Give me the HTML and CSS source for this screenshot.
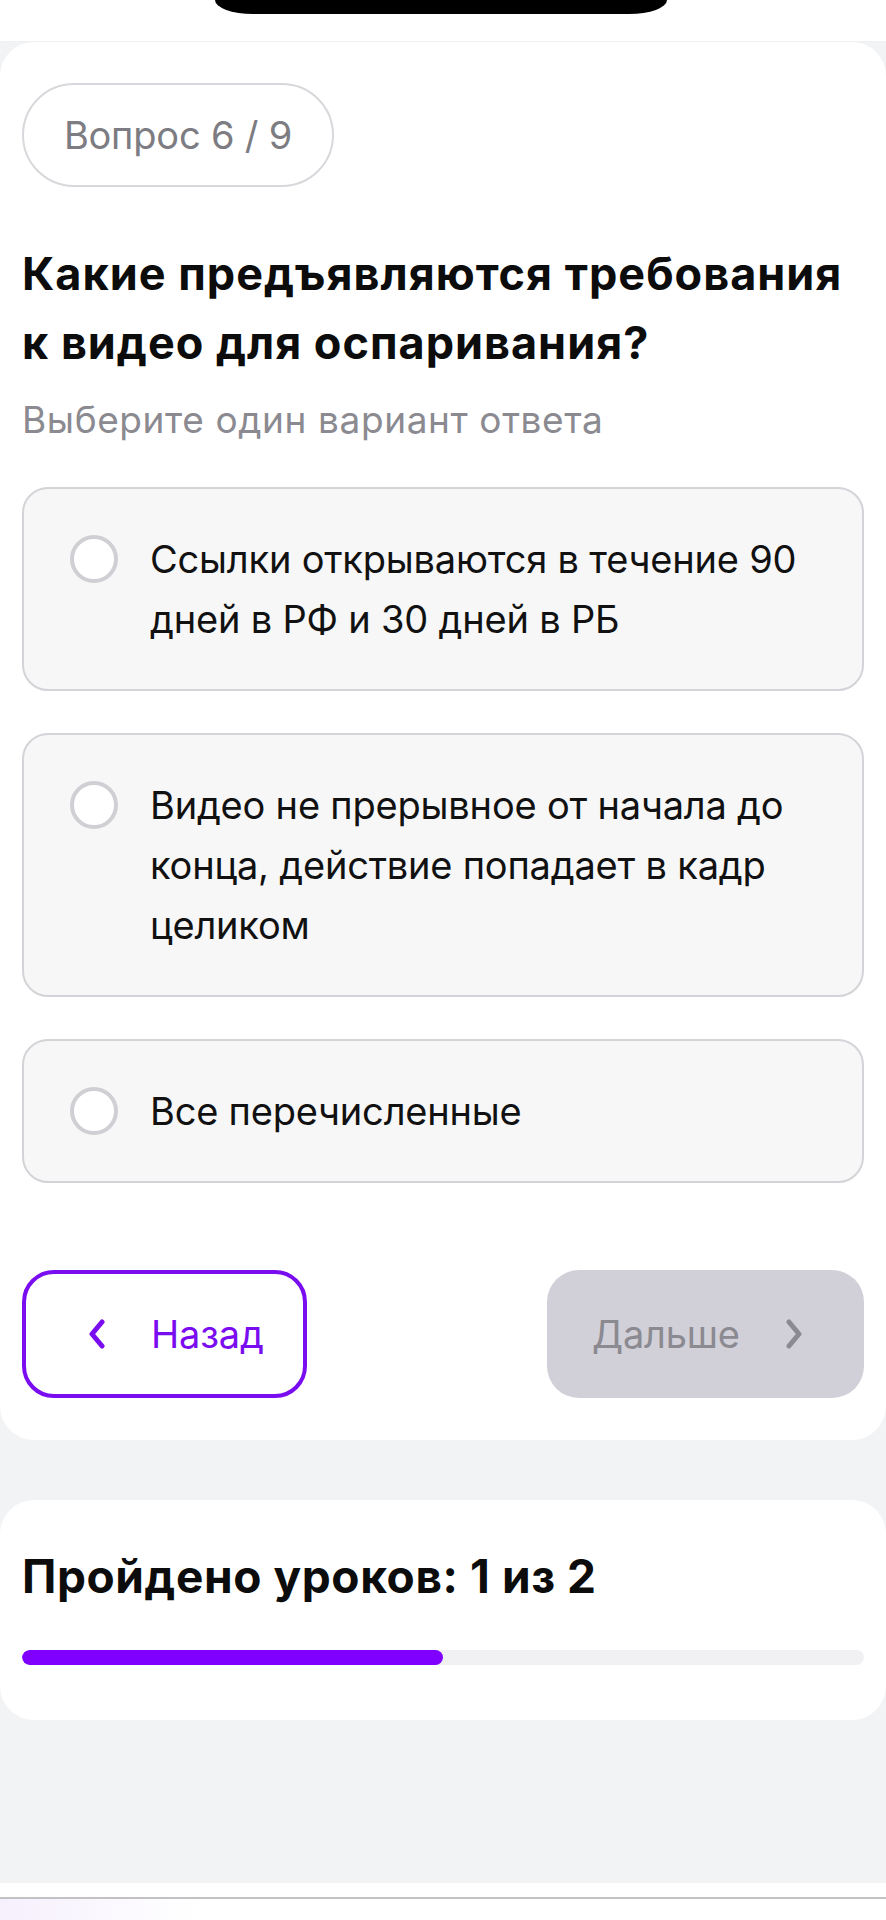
FILE: index.html
```html
<!DOCTYPE html>
<html lang="ru">
<head>
<meta charset="utf-8">
<title>Вопрос 6 / 9</title>
<link rel="stylesheet" href="styles.css">
</head>
<body>
<div class="status"><div class="notch"></div></div>
<main class="page">
  <section class="card quiz">
    <div class="pill">Вопрос 6 / 9</div>
    <h1 class="question">Какие предъявляются требования к видео для оспаривания?</h1>
    <p class="hint">Выберите один вариант ответа</p>
    <div class="options">
      <label class="option"><span class="radio"></span><span class="opt-text">Ссылки открываются в течение 90 дней в РФ и 30 дней в РБ</span></label>
      <label class="option"><span class="radio"></span><span class="opt-text">Видео не прерывное от начала до конца, действие попадает в кадр целиком</span></label>
      <label class="option"><span class="radio"></span><span class="opt-text">Все перечисленные</span></label>
    </div>
    <div class="nav">
      <button class="btn btn-back">
        <svg class="chev" viewBox="0 0 20 30" width="20" height="30"><polyline points="15,3 5,15 15,27" fill="none" stroke="currentColor" stroke-width="5" stroke-linecap="round" stroke-linejoin="round"/></svg>
        <span>Назад</span>
      </button>
      <button class="btn btn-next" disabled>
        <span>Дальше</span>
        <svg class="chev" viewBox="0 0 20 30" width="20" height="30"><polyline points="5,3 15,15 5,27" fill="none" stroke="currentColor" stroke-width="5" stroke-linecap="round" stroke-linejoin="round"/></svg>
      </button>
    </div>
  </section>
  <section class="card progress-card">
    <h2 class="progress-title">Пройдено уроков: 1 из 2</h2>
    <div class="track"><div class="fill" style="width:50%"></div></div>
  </section>
</main>
<footer class="bottom"><div class="glow"></div></footer>
</body>
</html>
```
FILE: styles.css
```css
* { box-sizing: border-box; }
html, body { margin: 0; padding: 0; }
body {
  width: 886px;
  height: 1920px;
  background: #f2f3f5;
  font-family: Inter, "Noto Sans", "Liberation Sans", sans-serif;
  color: #111111;
  display: flex;
  flex-direction: column;
  overflow: hidden;
}
.status {
  height: 42px;
  background: #ffffff;
  position: relative;
  flex: none;
  border-bottom: 1px solid #f0f0f2;
}
.notch {
  position: absolute;
  left: 215px;
  top: 0;
  width: 452px;
  height: 14px;
  background: #000;
  border-radius: 0 0 38px 38px / 0 0 14px 14px;
}
.page {
  flex: 1;
  display: flex;
  flex-direction: column;
  gap: 60px;
}
.card {
  background: #ffffff;
  border-radius: 34px;
  padding: 0 22px;
}
.quiz {
  padding-top: 41px;
  padding-bottom: 42px;
  display: flex;
  flex-direction: column;
}
.pill {
  align-self: flex-start;
  width: 312px;
  height: 104px;
  border: 2px solid #d8d8dc;
  border-radius: 52px;
  display: flex;
  align-items: center;
  justify-content: center;
  font-size: 38px;
  color: #7c7c82;
  letter-spacing: -0.2px;
}
.question {
  margin: 52px 0 0;
  max-width: 828px;
  font-size: 45px;
  line-height: 69px;
  font-weight: 700;
  letter-spacing: 1px;
  color: #0c0c0c;
}
.hint {
  margin: 21px 0 0;
  font-size: 37px;
  line-height: 44px;
  color: #8a8a90;
  letter-spacing: 0.6px;
}
.options {
  margin-top: 45px;
  display: flex;
  flex-direction: column;
  gap: 42px;
}
.option {
  display: flex;
  align-items: flex-start;
  gap: 32px;
  padding: 40px 30px 40px 46px;
  background: #f7f7f8;
  border: 2px solid #d4d4d8;
  border-radius: 26px;
}
.radio {
  flex: none;
  width: 48px;
  height: 48px;
  margin-top: 6px;
  border: 4px solid #cfcfd4;
  border-radius: 50%;
  background: #ffffff;
}
.opt-text {
  font-size: 38px;
  line-height: 60px;
  letter-spacing: -0.2px;
  color: #111111;
}
.nav {
  margin-top: 87px;
  display: flex;
  justify-content: space-between;
}
.btn {
  height: 128px;
  border-radius: 32px;
  display: flex;
  align-items: center;
  font-family: inherit;
  font-size: 38px;
  letter-spacing: -0.2px;
  gap: 44px;
}
.btn-back {
  width: 285px;
  background: #ffffff;
  border: 4px solid #7a0cf0;
  color: #7a0cf0;
  padding: 0 44px 0 58px;
}
.btn-next {
  width: 317px;
  background: #d1d0d8;
  border: none;
  color: #8b8a91;
  padding: 0 60px 0 45px;
  justify-content: space-between;
}
.chev { flex: none; width: 20px; height: 30px; }
.btn-back .chev { margin-left: 3px; }
.progress-card {
  padding-top: 48px;
  padding-bottom: 55px;
}
.progress-title {
  margin: 0;
  font-size: 46px;
  line-height: 56px;
  font-weight: 700;
  letter-spacing: 0.6px;
  color: #0c0c0c;
}
.track {
  margin-top: 46px;
  height: 15px;
  border-radius: 8px;
  background: #f1f1f3;
  overflow: hidden;
}
.fill {
  height: 100%;
  border-radius: 8px;
  background: #7f00ff;
}
.bottom {
  flex: none;
  height: 37px;
  background: #ffffff;
  position: relative;
}
.bottom::before {
  content: "";
  display: block;
  height: 14px;
  border-bottom: 2px solid #c2c2c4;
}
.glow {
  height: 21px;
  width: 200px;
  background: linear-gradient(90deg, #f6f0fd, #ffffff);
}
```
